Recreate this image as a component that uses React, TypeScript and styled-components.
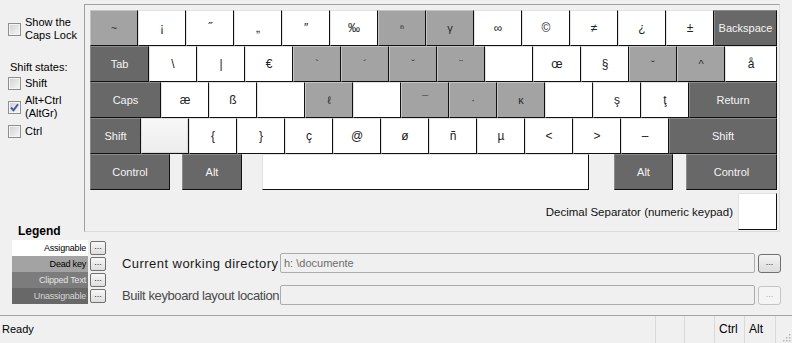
import React from 'react';
import styled, { createGlobalStyle, css } from 'styled-components';

type KeyKind = 'char' | 'dead' | 'mod' | 'off';

interface KeyDef {
  label?: string;
  kind?: KeyKind;
  width?: number;
  gap?: number;
}

const GlobalStyle = createGlobalStyle`
  body {
    margin: 0;
    background: #f0f0f0;
    font-family: "Liberation Sans", Arial, sans-serif;
    font-size: 11px;
    color: #000;
  }
`;

const row1: KeyDef[] = [
  { label: '~', kind: 'dead' },
  { label: '¡' },
  { label: '˝' },
  { label: '„' },
  { label: '″' },
  { label: '‰' },
  { label: 'ⁿ', kind: 'dead' },
  { label: 'γ', kind: 'dead' },
  { label: '∞' },
  { label: '©' },
  { label: '≠' },
  { label: '¿' },
  { label: '±' },
  { label: 'Backspace', kind: 'mod', width: 63 },
];

const row2: KeyDef[] = [
  { label: 'Tab', kind: 'mod', width: 59 },
  { label: '\\' },
  { label: '|' },
  { label: '€' },
  { label: '`', kind: 'dead' },
  { label: '´', kind: 'dead' },
  { label: 'ˇ', kind: 'dead' },
  { label: '¨', kind: 'dead' },
  {},
  { label: 'œ' },
  { label: '§' },
  { label: '˘', kind: 'dead' },
  { label: '^', kind: 'dead' },
  { label: 'å', width: 52 },
];

const row3: KeyDef[] = [
  { label: 'Caps', kind: 'mod', width: 71 },
  { label: 'æ' },
  { label: 'ß' },
  {},
  { label: 'ℓ', kind: 'dead' },
  {},
  { label: '¯', kind: 'dead' },
  { label: '·', kind: 'dead' },
  { label: 'ĸ', kind: 'dead' },
  {},
  { label: 'ş' },
  { label: 'ţ' },
  { label: 'Return', kind: 'mod', width: 88 },
];

const row4: KeyDef[] = [
  { label: 'Shift', kind: 'mod', width: 51 },
  { kind: 'off' },
  { label: '{' },
  { label: '}' },
  { label: 'ç' },
  { label: '@' },
  { label: 'ø' },
  { label: 'ñ' },
  { label: 'µ' },
  { label: '<' },
  { label: '>' },
  { label: '–' },
  { label: 'Shift', kind: 'mod', width: 108 },
];

const row5: KeyDef[] = [
  { label: 'Control', kind: 'mod', width: 80 },
  { label: 'Alt', kind: 'mod', width: 60, gap: 12 },
  { width: 327, gap: 20 },
  { label: 'Alt', kind: 'mod', width: 59, gap: 25 },
  { label: 'Control', kind: 'mod', width: 91, gap: 13 },
];

const legendItems = [
  { label: 'Assignable', bg: '#ffffff', fg: '#000000' },
  { label: 'Dead key', bg: '#a3a3a3', fg: '#000000' },
  { label: 'Clipped Text', bg: '#7c7c7c', fg: '#e6e6e6' },
  { label: 'Unassignable', bg: '#686868', fg: '#d6d6d6' },
];

function Checkbox({ checked }: { checked?: boolean }) {
  return (
    <StyledCheckbox>
      {checked && (
        <svg width="11" height="11" viewBox="0 0 11 11">
          <path d="M2 5.5 L4.5 8.3 L9 2.2" fill="none" stroke="#3b55a3" strokeWidth="1.9" />
        </svg>
      )}
    </StyledCheckbox>
  );
}

function KeyRow({ keys }: { keys: KeyDef[] }) {
  return (
    <StyledKeyRow>
      {keys.map((key, i) => (
        <StyledKey key={i} $kind={key.kind || 'char'} $w={key.width || 48} $gap={key.gap || 0}>
          {key.label}
        </StyledKey>
      ))}
    </StyledKeyRow>
  );
}

function App() {
  return (
    <>
      <GlobalStyle />
      <StyledWindow>
        <StyledTop>
          <StyledSidebar>
            <StyledOption>
              <Checkbox />
              <span>
                Show the
                <br />
                Caps Lock
              </span>
            </StyledOption>
            <StyledSideHeading>Shift states:</StyledSideHeading>
            <StyledOption>
              <Checkbox />
              <span>Shift</span>
            </StyledOption>
            <StyledOption>
              <Checkbox checked />
              <span>
                Alt+Ctrl
                <br />
                (AltGr)
              </span>
            </StyledOption>
            <StyledOption>
              <Checkbox />
              <span>Ctrl</span>
            </StyledOption>
            <StyledLegendTitle>Legend</StyledLegendTitle>
          </StyledSidebar>
          <StyledKeyboardPanel>
            <KeyRow keys={row1} />
            <KeyRow keys={row2} />
            <KeyRow keys={row3} />
            <KeyRow keys={row4} />
            <KeyRow keys={row5} />
            <StyledDecimalRow>
              <span>Decimal Separator (numeric keypad)</span>
              <StyledDecimalKey />
            </StyledDecimalRow>
          </StyledKeyboardPanel>
        </StyledTop>
        <StyledBottom>
          <StyledLegend>
            {legendItems.map((item) => (
              <React.Fragment key={item.label}>
                <StyledLegendSwatch $bg={item.bg} $fg={item.fg}>
                  {item.label}
                </StyledLegendSwatch>
                <StyledSmallButton>...</StyledSmallButton>
              </React.Fragment>
            ))}
          </StyledLegend>
          <StyledFields>
            <StyledFieldLabel $spacing={0.45}>Current working directory</StyledFieldLabel>
            <StyledTextBox>h: \documente</StyledTextBox>
            <StyledBrowseButton>...</StyledBrowseButton>
            <StyledFieldLabel $spacing={-0.4} $disabled>
              Built keyboard layout location
            </StyledFieldLabel>
            <StyledTextBox />
            <StyledBrowseButton $disabled>...</StyledBrowseButton>
          </StyledFields>
        </StyledBottom>
        <StyledStatusBar>
          <StyledStatusMain>Ready</StyledStatusMain>
          <StyledStatusCell $w={29} />
          <StyledStatusCell $w={30} />
          <StyledStatusCell $w={30}>Ctrl</StyledStatusCell>
          <StyledStatusCell $w={31}>Alt</StyledStatusCell>
          <StyledGrip>
            <svg width="12" height="12" viewBox="0 0 12 12">
              {[
                [9, 3],
                [9, 6],
                [6, 6],
                [9, 9],
                [6, 9],
                [3, 9],
              ].map(([x, y]) => (
                <rect key={`${x}-${y}`} x={x} y={y} width="1.5" height="1.5" fill="#b5b5b5" />
              ))}
            </svg>
          </StyledGrip>
        </StyledStatusBar>
      </StyledWindow>
    </>
  );
}

const StyledWindow = styled.div`
  display: flex;
  flex-direction: column;
  width: 792px;
  height: 343px;
  overflow: hidden;
`;

const StyledTop = styled.div`
  display: flex;
  height: 240px;
`;

const StyledSidebar = styled.div`
  display: flex;
  flex-direction: column;
  width: 84px;
  padding: 16px 0 2px 8px;
  box-sizing: border-box;
  gap: 4px;
`;

const StyledOption = styled.label`
  display: flex;
  align-items: center;
  gap: 4px;
  line-height: 13px;
  min-height: 14px;
`;

const StyledSideHeading = styled.div`
  margin: 14px 0 -2px 2px;
  line-height: 14px;
`;

const StyledLegendTitle = styled.div`
  margin-top: auto;
  margin-left: 10px;
  font-weight: bold;
  font-size: 12px;
  line-height: 14px;
`;

const StyledCheckbox = styled.span`
  display: flex;
  align-items: center;
  justify-content: center;
  flex: none;
  width: 13px;
  height: 13px;
  box-sizing: border-box;
  border: 1px solid #8e8f8f;
  box-shadow: inset 0 0 0 1px #f4f4f4;
  background: linear-gradient(135deg, #cfd1d4, #f7f7f7);
`;

const StyledKeyboardPanel = styled.div`
  display: flex;
  flex-direction: column;
  width: 696px;
  height: 228px;
  margin-top: 4px;
  padding: 5px 2px 0 5px;
  box-sizing: border-box;
  border: 1px solid #a0a0a0;
  border-right-color: #dcdcdc;
  border-bottom-color: #dcdcdc;
`;

const StyledKeyRow = styled.div`
  display: flex;
  height: 36px;
`;

const keyKinds = {
  char: css`
    background: #ffffff;
    color: #222;
    border-top-color: #e2e2e2;
    border-left-color: #e2e2e2;
    font-size: 12px;
  `,
  dead: css`
    background: #a3a3a3;
    color: #2a2a2a;
    border-top-color: #c4c4c4;
    border-left-color: #c4c4c4;
    font-size: 11px;
  `,
  mod: css`
    background: #686868;
    color: #f4f4f4;
    border-top-color: #8a8a8a;
    border-left-color: #8a8a8a;
    font-size: 11px;
  `,
  off: css`
    background: linear-gradient(#f8f8f8, #ececec);
    border-top-color: #dedede;
    border-left-color: #dedede;
    box-shadow: inset -1px -1px 0 #d8d8d8;
  `,
};

const StyledKey = styled.div<{ $kind: KeyKind; $w: number; $gap: number }>`
  display: flex;
  align-items: center;
  justify-content: center;
  flex: none;
  width: ${(p) => p.$w}px;
  margin-left: ${(p) => p.$gap}px;
  height: 36px;
  box-sizing: border-box;
  border: 1px solid;
  border-right-color: #111;
  border-bottom-color: #111;
  white-space: nowrap;
  ${(p) => keyKinds[p.$kind]}
`;

const StyledDecimalRow = styled.div`
  display: flex;
  justify-content: flex-end;
  align-items: center;
  gap: 5px;
  margin-top: 3px;
  font-size: 11.5px;
  color: #111;
`;

const StyledDecimalKey = styled.div`
  width: 39px;
  height: 37px;
  box-sizing: border-box;
  background: #fff;
  border: 1px solid #e2e2e2;
  border-right-color: #111;
  border-bottom-color: #111;
`;

const StyledBottom = styled.div`
  display: flex;
  height: 75px;
`;

const StyledLegend = styled.div`
  display: grid;
  grid-template-columns: 76px 18px;
  grid-auto-rows: 16px;
  align-items: center;
  padding: 0 0 0 12px;
  align-content: start;
`;

const StyledLegendSwatch = styled.div<{ $bg: string; $fg: string }>`
  height: 16px;
  line-height: 16px;
  text-align: right;
  padding-right: 2px;
  font-size: 9px;
  letter-spacing: -0.2px;
  background: ${(p) => p.$bg};
  color: ${(p) => p.$fg};
`;

const StyledSmallButton = styled.div`
  width: 16px;
  height: 14px;
  margin-left: 2px;
  box-sizing: border-box;
  border: 1px solid #707070;
  border-radius: 2px;
  background: linear-gradient(#f7f7f7, #dedede);
  font-size: 9px;
  line-height: 9px;
  text-align: center;
  color: #111;
`;

const StyledFields = styled.div`
  display: grid;
  grid-template-columns: 155px 475px 23px;
  grid-auto-rows: 20px;
  column-gap: 3px;
  row-gap: 12px;
  align-items: center;
  margin-left: 16px;
  padding-top: 13px;
`;

const StyledFieldLabel = styled.div<{ $disabled?: boolean; $spacing: number }>`
  font-size: 13px;
  letter-spacing: ${(p) => p.$spacing}px;
  color: ${(p) => (p.$disabled ? '#4a4a4a' : '#1a1a1a')};
  white-space: nowrap;
`;

const StyledTextBox = styled.div`
  height: 20px;
  box-sizing: border-box;
  padding: 0 3px;
  border: 1px solid #acacac;
  border-radius: 2px;
  background: #f0f0f0;
  color: #6d6d6d;
  font-size: 11px;
  line-height: 18px;
`;

const StyledBrowseButton = styled.div<{ $disabled?: boolean }>`
  height: 19px;
  box-sizing: border-box;
  border: 1px solid ${(p) => (p.$disabled ? '#c4c4c4' : '#707070')};
  border-radius: 3px;
  background: ${(p) => (p.$disabled ? '#f4f4f4' : 'linear-gradient(#f4f4f4, #dcdcdc)')};
  color: ${(p) => (p.$disabled ? '#a8a8a8' : '#222')};
  font-size: 9px;
  line-height: 15px;
  text-align: center;
`;

const StyledStatusBar = styled.div`
  display: flex;
  height: 28px;
  box-sizing: border-box;
  border-top: 1px solid #a3a3a3;
  font-size: 11px;
`;

const StyledStatusMain = styled.div`
  flex: 1;
  padding-left: 2px;
  line-height: 27px;
`;

const StyledStatusCell = styled.div<{ $w: number }>`
  width: ${(p) => p.$w}px;
  box-sizing: border-box;
  padding-left: 4px;
  border-left: 1px solid #d9d9d9;
  font-size: 12px;
  line-height: 27px;
`;

const StyledGrip = styled.div`
  display: flex;
  align-items: flex-end;
  justify-content: flex-end;
  width: 17px;
  box-sizing: border-box;
  border-left: 1px solid #d9d9d9;
`;

export default App;
